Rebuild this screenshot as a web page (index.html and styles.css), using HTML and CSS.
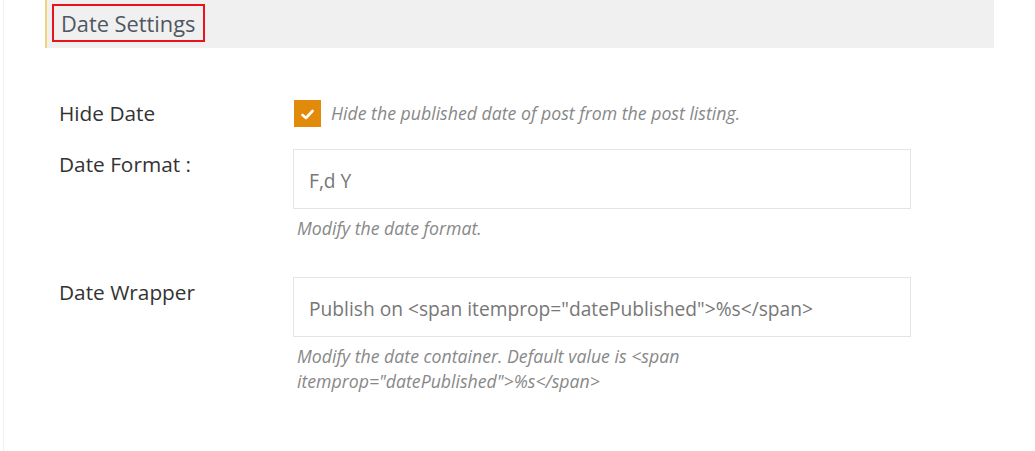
FILE: index.html
```html
<!DOCTYPE html>
<html lang="en">
<head>
  <meta charset="UTF-8" />
  <title>Date Settings</title>
  <link rel="stylesheet" href="styles.css">
</head>
<body>
  <div class="panel">
    <div class="section-head">
      <h2 class="section-title">Date Settings</h2>
    </div>

    <div class="fields">
      <div class="field">
        <label class="field-label" for="hide-date">Hide Date</label>
        <div class="field-control check-row">
          <input type="checkbox" id="hide-date" checked />
          <span class="check-box">
            <svg width="13" height="11" viewBox="0 0 13 11"><path d="M1.5 6 L5 9 L11.5 2" fill="none" stroke="#fff" stroke-width="2.6" stroke-linecap="round" stroke-linejoin="round"/></svg>
          </span>
          <span class="help">Hide the published date of post from the post listing.</span>
        </div>
      </div>

      <div class="field field-help">
        <label class="field-label" for="date-format">Date Format :</label>
        <div class="field-control">
          <input type="text" id="date-format" value="F,d Y" />
          <p class="help">Modify the date format.</p>
        </div>
      </div>

      <div class="field field-help">
        <label class="field-label" for="date-wrapper">Date Wrapper</label>
        <div class="field-control">
          <input type="text" id="date-wrapper" value='Publish on &lt;span itemprop="datePublished"&gt;%s&lt;/span&gt;' />
          <p class="help">Modify the date container. Default value is &lt;span<br>itemprop="datePublished"&gt;%s&lt;/span&gt;</p>
        </div>
      </div>
    </div>
  </div>
</body>
</html>
```

FILE: styles.css
```css
* {
  box-sizing: border-box;
}

body {
  margin: 0;
  font-family: 'Open Sans', sans-serif;
  background: #fff;
  color: #333;
}

.panel {
  margin-left: 3px;
  height: 451px;
  border-left: 1px solid #f1f1f1;
  padding-left: 41px;
}

/* En-tete de section */
.section-head {
  width: 949px;
  height: 48px;
  background: #f0f0f0;
  border-left: 2px solid #f4d27c;
  padding: 4px 0 0 5px;
}

.section-title {
  display: inline-block;
  margin: 0;
  height: 38px;
  padding: 0 8px 0 7px;
  border: 2px solid #e8141b;
  font-size: 21.8px;
  font-weight: 400;
  line-height: 36px;
  color: #4f5762;
}

/* Champs */
.fields {
  padding: 52px 0 0 14px;
}

.field {
  display: grid;
  grid-template-columns: 234px 618px;
  margin-bottom: 22px;
}

.field-help {
  margin-bottom: 36px;
}

.field-label {
  font-size: 20.8px;
  line-height: 27px;
  padding-top: 2px;
  color: #333;
}

.field:first-child .field-label {
  padding-top: 0;
}

.check-row {
  display: flex;
  align-items: center;
  gap: 10px;
  padding-left: 1px;
}

.check-row input {
  display: none;
}

.check-box {
  width: 27px;
  height: 27px;
  background: #e28a0a;
  display: flex;
  align-items: center;
  justify-content: center;
}

.check-box svg {
  margin-top: 2px;
}

.help {
  margin: 0;
  font-size: 17.7px;
  font-style: italic;
  line-height: 25px;
  color: #888;
}

.field-control input[type="text"] {
  display: block;
  width: 618px;
  height: 60px;
  border: 1px solid #e4e4e4;
  padding: 3px 15px 0;
  font-family: 'Open Sans', sans-serif;
  font-size: 19.2px;
  color: #777;
  background: #fff;
  outline: none;
}

.field-control p.help {
  margin: 7px 0 0 4px;
}
```
